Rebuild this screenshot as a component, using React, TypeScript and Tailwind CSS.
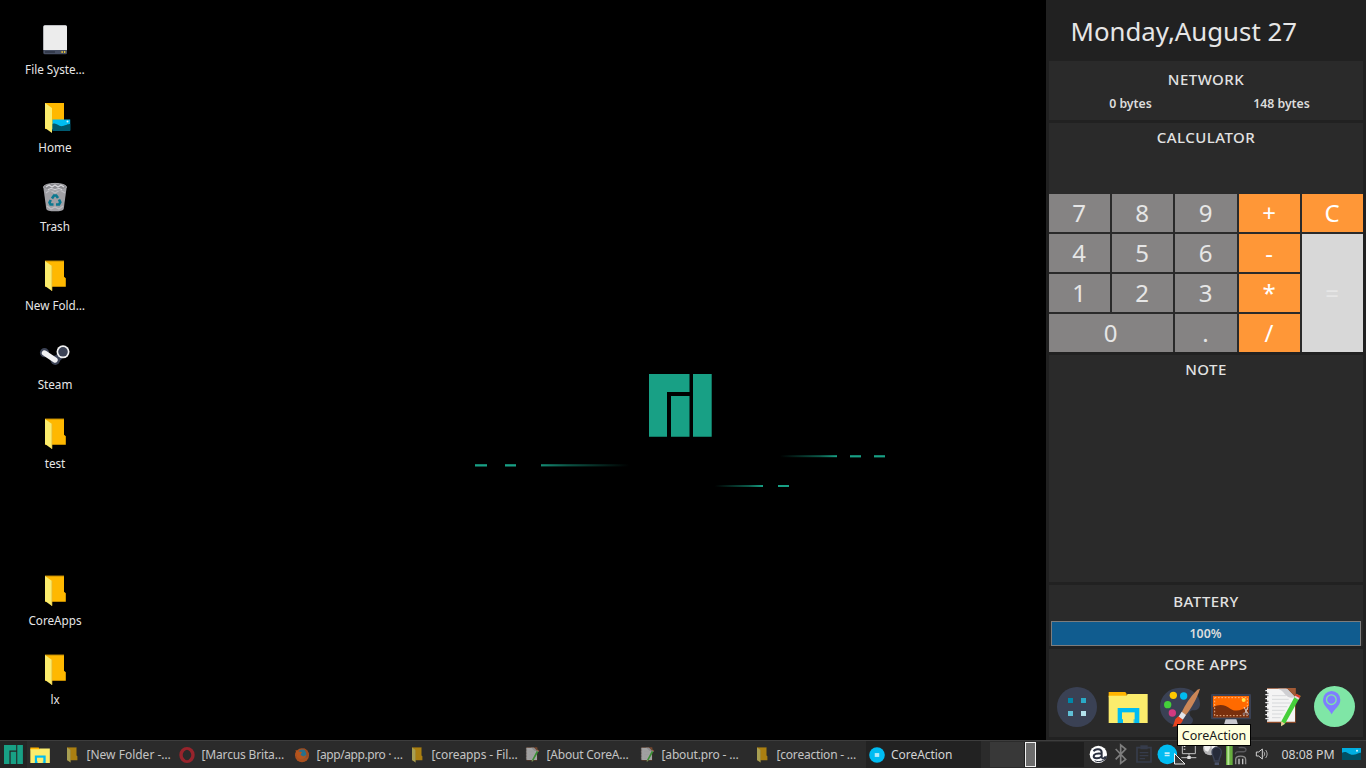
import type { ReactNode } from "react";
import clsx from "clsx";

function FolderIcon({ className }: { className?: string }) {
  return (
    <svg viewBox="0 0 32 32" className={className}>
      <path d="M6 .8h19v16l1.800 1.500v8.400H6z" fill="#ffb800" />
      <path d="M6 .8h19v.8H6z" fill="#c98f00" />
      <path d="M6 1l7 5v25l-7-5z" fill="#fbec6c" />
      <path d="M12.500 6v25l.8-.3V5.600z" fill="#e2b93a" />
    </svg>
  );
}

function HomeIcon() {
  return (
    <svg viewBox="0 0 32 32" className="size-8">
      <path d="M6 1h19v26H6z" fill="#ffb800" />
      <path d="M6 1l7 5v25l-7-5z" fill="#fbec6c" />
      <path d="M13.500 17.500H31.200v11H13.500z" fill="#00bcf2" />
      <path d="M13.500 22c4-2 6 3 10 2s5-2 7.700-2v6.500H13.500z" fill="#00586c" />
      <circle cx="28.500" cy="19.500" r="1" fill="#d9f5fb" />
    </svg>
  );
}

function DriveIcon() {
  return (
    <svg viewBox="0 0 32 32" className="size-8">
      <rect x="4.300" y="1.300" width="23.700" height="29" rx="1.500" fill="#474f63" />
      <path d="M5.800 1.300h20.700a1.500 1.500 0 0 1 1.500 1.500V26H4.300V2.800a1.500 1.500 0 0 1 1.500-1.500z" fill="#ececec" />
      <rect x="6" y="27.300" width="10" height="1.400" fill="#2b3242" />
      <rect x="22.500" y="27" width="1.300" height="2" fill="#e3c23a" />
      <rect x="25" y="27" width="1.300" height="2" fill="#e3c23a" />
    </svg>
  );
}

function TrashIcon() {
  return (
    <svg viewBox="0 0 32 32" className="size-8">
      <path d="M4.300 6L7.300 28q.5 2.300 8.700 2.300t8.700-2.300l3-22z" fill="#a0a0a5" />
      <path d="M7 12l4-3 5 3 5-3 5 3M8 25l4 3 4-2 4 2 4-3" stroke="#bebec3" strokeWidth="1.300" fill="none" />
      <ellipse cx="16" cy="6" rx="11.500" ry="3.600" fill="#8b8b90" stroke="#a9a9ad" />
      <path d="M7 6l3-2 3 2 3-2 3 2 3-2 3 2M9 8.500l3-1 4 1 4-1 3 1" stroke="#d8d8dc" strokeWidth="1.200" fill="none" />
      <g stroke="#0b7890" strokeWidth="2.600" fill="none">
        <path d="M13 17.500l2-3h2.200l1.800 2.500" />
        <path d="M20 18.500l1.300 2.800-1.300 2.200h-3" />
        <path d="M14.500 23.500h-3l-1-2 1.300-2.500" />
      </g>
    </svg>
  );
}

function SteamIcon() {
  return (
    <svg viewBox="0 0 32 32" className="size-8">
      <path d="M16.300 21.500L25 13" stroke="#3c4356" strokeWidth="7" strokeLinecap="round" />
      <circle cx="5.500" cy="13.700" r="4.600" fill="#3c4356" />
      <circle cx="16.300" cy="21.300" r="4.700" fill="#3c4356" />
      <path d="M5.500 14L16 21" stroke="#f0f0f2" strokeWidth="5.400" strokeLinecap="round" />
      <circle cx="24" cy="12.800" r="6.500" fill="#f2f2f2" />
      <circle cx="24" cy="12.800" r="4.800" fill="#3c4356" />
    </svg>
  );
}

function DesktopItem({ label, icon, tall = true }: { label: string; icon: ReactNode; tall?: boolean }) {
  return (
    <div className={clsx("flex w-[110px] flex-col items-center", tall ? "h-[79px]" : "h-[78px]")}>
      {icon}
      <span className="mt-[5px] text-[11.7px] leading-4 text-[#e6e6e6]">{label}</span>
    </div>
  );
}

function ManjaroLogo({ className }: { className?: string }) {
  return (
    <svg viewBox="0 0 63 63" className={className} fill="#18a085">
      <path d="M0 0h40.500v18H18v44.700H0zM22 22h18.500v40.700H22zM44 0h18.700v62.700H44z" />
    </svg>
  );
}

function Wallpaper() {
  return (
    <div className="relative flex-1">
      <ManjaroLogo className="absolute top-[374px] left-[539px] size-[63px]" />
      <svg viewBox="460 440 440 60" className="absolute top-[440px] left-[350px] h-[60px] w-[440px]">
        <defs>
          <linearGradient id="fadeRight">
            <stop offset="0" stopColor="#148a73" />
            <stop offset=".3" stopColor="#0b5546" />
            <stop offset="1" stopColor="#000" />
          </linearGradient>
          <linearGradient id="fadeLeft">
            <stop offset="0" stopColor="#000" />
            <stop offset=".7" stopColor="#0b5a4a" />
            <stop offset="1" stopColor="#18a085" />
          </linearGradient>
        </defs>
        <g fill="#18a085">
          <rect x="475" y="464.200" width="12" height="2.300" />
          <rect x="505" y="464.200" width="11" height="2.300" />
          <rect x="850" y="455.200" width="11" height="2.200" />
          <rect x="874" y="455.200" width="11" height="2.200" />
          <rect x="778" y="485" width="11" height="2" />
        </g>
        <rect x="541" y="464.200" width="88" height="2.200" fill="url(#fadeRight)" />
        <rect x="780" y="455.200" width="57" height="2" fill="url(#fadeLeft)" />
        <rect x="715" y="485" width="48" height="2" fill="url(#fadeLeft)" />
      </svg>
    </div>
  );
}

function SectionTitle({ children }: { children: ReactNode }) {
  return <h2 className="text-center text-[15px] leading-5 font-medium tracking-[0.45px] text-[#e2e2e2]">{children}</h2>;
}

const keyBase = "flex items-center justify-center pr-px text-[24px] leading-none";
const digitKey = "bg-[#858383] text-[#e6e6e6]";
const opKey = "bg-[#ff9737] text-white";

function Calculator() {
  const keys: [string, string][] = [
    ["7", digitKey], ["8", digitKey], ["9", digitKey], ["+", opKey], ["C", opKey],
    ["4", digitKey], ["5", digitKey], ["6", digitKey], ["-", opKey],
    ["=", "row-span-3 bg-[#d8d8d8] text-[#e6e6e6]"],
    ["1", digitKey], ["2", digitKey], ["3", digitKey], ["*", opKey],
    ["0", "col-span-2 bg-[#858383] text-[#e6e6e6]"], [".", digitKey], ["/", opKey],
  ];
  return (
    <section className="mt-[3px] h-[229px] bg-[#2a2a2a] pt-[4px]">
      <SectionTitle>CALCULATOR</SectionTitle>
      <div className="mt-[47px] grid grid-cols-[61px_61px_62px_61px_61px] grid-rows-[38px_38px_38px_38px] gap-[2px]">
        {keys.map(([k, style]) => (
          <button key={k} className={clsx(keyBase, style)}>{k}</button>
        ))}
      </div>
    </section>
  );
}

function AppsGridIcon() {
  return (
    <svg viewBox="51 36 120 120" className="size-10">
      <circle cx="111" cy="96" r="60" fill="#3a4154" />
      <path d="M84 69h15v15H84z" fill="#0088a9" />
      <path d="M123 69h15v15h-15z" fill="#2baac6" />
      <path d="M84 108h15v15H84z" fill="#60bfd6" />
      <path d="M123 108h15v15h-15z" fill="#b4e2ec" />
    </svg>
  );
}

function FilesIcon({ className }: { className?: string }) {
  return (
    <svg viewBox="205 36 120 120" className={className}>
      <path d="M207 51h50l4 6v10h-54z" fill="#ffb400" />
      <path d="M207 62h53l4-5h60v87H207z" fill="#fbec6c" />
      <path d="M234 99h65v45h-65z" fill="#00bcf2" />
      <path d="M247 112h38v32h-38z" fill="#fbec6c" />
      <path d="M247 133h3v11h-3zM282 133h3v11h-3z" fill="#00bcf2" />
    </svg>
  );
}

function PaintIcon() {
  return (
    <svg viewBox="360 36 120 120" className="size-10">
      <path d="M420 38c37 0 60 23 60 48 0 14-8 20-19 20-10 0-14 5-11 14 2 8 12 8 8 20-4 10-20 14-38 13-34-2-60-27-60-58s25-57 60-57z" fill="#3a4154" />
      <circle cx="400" cy="61" r="11" fill="#ffc800" />
      <circle cx="431" cy="63" r="11" fill="#00bcf2" />
      <circle cx="383" cy="89" r="11" fill="#44d03a" />
      <circle cx="397" cy="114" r="11" fill="#d23a80" />
      <path d="M480 41l-8 3c-22 22-37 46-47 68l12 9c18-24 33-48 43-80z" fill="#cb8658" />
      <path d="M425 110l13 10-10 15-13-9z" fill="#e4e4ea" />
      <path d="M415 124l14 10c-4 13-16 20-32 21 6-7 5-14 9-23z" fill="#e9441f" />
    </svg>
  );
}

function ScreenshotIcon() {
  return (
    <svg viewBox="516 36 120 120" className="size-10">
      <path d="M560 132h32l6 20h-44z" fill="#c9c9ce" />
      <rect x="516" y="57" width="120" height="76" rx="4" fill="#3a4154" />
      <path d="M522 63h108v64H522z" fill="#ff6a00" />
      <path d="M522 97c20-12 38-6 52 4s34 6 56-8v34H522z" fill="#7a2f0c" />
      <path d="M527 68h98v54h-98z" fill="none" stroke="#ffc89a" strokeWidth="2.500" strokeDasharray="5 5" />
      <circle cx="614" cy="75" r="6" fill="#ffe14d" />
      <path d="M615 96l9 18M627 96l-9 18" stroke="#e8e8ee" strokeWidth="2.500" />
      <circle cx="615" cy="117" r="3" fill="none" stroke="#9aa0b4" strokeWidth="2" />
      <circle cx="626" cy="117" r="3" fill="none" stroke="#9aa0b4" strokeWidth="2" />
    </svg>
  );
}

function NotesIcon({ className }: { className?: string }) {
  return (
    <svg viewBox="669 36 120 120" className={className}>
      <path d="M681 39h86v105h-86z" fill="#8e4a28" />
      <path d="M681 41h58l26 28v71h-84z" fill="#f4f4f4" />
      <path d="M714 41h28l24 25c-12 4-22 2-28-5s-10-14-24-20z" fill="#cfcfd2" />
      <path d="M742 39h25v27z" fill="#a35b36" />
      <g stroke="#c9cbcf" strokeWidth="2">
        <path d="M696 62h42M696 73h50M696 84h56M696 95h46M696 106h38M696 117h32M696 128h26" />
      </g>
      <path d="M683 45v94" stroke="#54545a" strokeWidth="5" strokeDasharray="3 5" />
      <path d="M676 47h14M676 59h14M676 71h14M676 83h14M676 95h14M676 107h14M676 119h14M676 131h14" stroke="#f2f2f4" strokeWidth="4" />
      <path d="M769 56l13 7-47 83-12 8 1-15z" fill="#46cf3a" />
      <path d="M769 56l13 7-4 8-13-8z" fill="#e03a2e" />
      <path d="M766 62l12 7-3 5-12-7z" fill="#ecd6df" />
      <path d="M724 139l11 7-12 8z" fill="#ecc89a" />
    </svg>
  );
}

function PinIcon() {
  return (
    <svg viewBox="822 33 123 123" className="size-[41px]">
      <circle cx="883.500" cy="94.500" r="61.500" fill="#7fe6a6" />
      <path d="M875 118c-7-16-26-25-26-44a26 26 0 0 1 52 0c0 19-19 28-26 44z" fill="#7f7dff" />
      <circle cx="874" cy="74" r="14.500" fill="none" stroke="#7fe6a6" strokeWidth="4" />
    </svg>
  );
}

function Sidebar() {
  return (
    <aside className="flex w-[320px] flex-col bg-[#212121] px-[3px]">
      <h1 className="h-[61px] pt-[13px] pl-[21.500px] text-[25.800px] leading-9 text-[#e6e6e6]">Monday,August 27</h1>
      <section className="h-[59px] bg-[#2a2a2a] pt-[8px]">
        <SectionTitle>NETWORK</SectionTitle>
        <div className="mt-[6px] grid grid-cols-2 text-center text-[12.300px] leading-[18px] font-semibold text-[#dcdcdc]">
          <span className="pl-[6px]">0 bytes</span>
          <span className="pr-[6px]">148 bytes</span>
        </div>
      </section>
      <Calculator />
      <section className="mt-[3px] h-[227px] bg-[#2a2a2a] pt-[4px]">
        <SectionTitle>NOTE</SectionTitle>
      </section>
      <section className="mt-[3px] h-[61px] bg-[#2a2a2a] px-[2px] pt-[6px]">
        <SectionTitle>BATTERY</SectionTitle>
        <div className="mt-[10px] h-[25px] border border-[#7d7d7d] bg-[#105c8f] pr-px text-center text-[12.300px] leading-[23px] font-semibold text-[#dcdcdc]">
          100%
        </div>
      </section>
      <section className="mt-[3px] h-[88px] bg-[#2a2a2a] pt-[5px]">
        <SectionTitle>CORE APPS</SectionTitle>
        <div className="mt-[12px] flex items-center justify-between pr-[8px] pl-[8px]">
          <AppsGridIcon />
          <FilesIcon className="size-10" />
          <PaintIcon />
          <ScreenshotIcon />
          <NotesIcon className="size-10" />
          <PinIcon />
        </div>
      </section>
    </aside>
  );
}

function OperaIcon() {
  return (
    <svg viewBox="0 0 16 16" className="size-4">
      <ellipse cx="8" cy="8" rx="6" ry="6.300" fill="none" stroke="#98242c" strokeWidth="3.400" />
      <ellipse cx="8" cy="8" rx="3.400" ry="5.300" fill="#2b2b2b" />
    </svg>
  );
}

function FirefoxIcon() {
  return (
    <svg viewBox="0 0 16 16" className="size-4">
      <circle cx="8" cy="8.300" r="7" fill="#a9501f" />
      <circle cx="8.500" cy="7" r="4.500" fill="#27708c" />
      <path d="M1.500 3l3 1.500L8 5 6.500 8l3 1.500L12 8c0 5-7 5-9 2z" fill="#b5541c" />
      <path d="M9 1c4 1 6 4 5.500 8L12 11c1-4 0-7-3-10z" fill="#9c4a1f" />
    </svg>
  );
}

function CoreActionIcon({ className }: { className?: string }) {
  return (
    <svg viewBox="0 0 16 16" className={className}>
      <circle cx="8" cy="8" r="7.800" fill="#00bcf2" />
      <path d="M5.800 6.200h4.400v3.600H5.800z" fill="#8adff8" />
      <path d="M5.800 6.400h4.400v1.100H5.800zM5.800 8.500h4.400v1.100H5.800z" fill="#d9f5fc" />
    </svg>
  );
}

function Task({ icon, label, active, tracking }: { icon: ReactNode; label: string; active?: boolean; tracking?: string }) {
  return (
    <div className={clsx("flex w-[115px] items-center gap-[6px] pl-[3px]", active && "bg-[#222]")}>
      <span className="flex w-4 justify-center">{icon}</span>
      <span className={clsx("text-[12px] whitespace-nowrap", active ? "text-[#d4d4d4]" : "pl-[.5px] text-[#c4c4c4]", tracking)}>
        {label}
      </span>
    </div>
  );
}

function Tray() {
  return (
    <div className="flex h-[27px] pl-[2px]">
      <svg viewBox="138 198 72 81" className="h-[27px] w-6">
        <circle cx="175" cy="238" r="26" fill="#fff" />
        <path d="M161 229c4-9 24-9 24 3v17M185 236c-14-2-24 1-24 8s15 9 24 0M185 249c5 3 10 0 12-5" fill="none" stroke="#2a3040" strokeWidth="6" />
        <path d="M200 244c-3 13-24 20-36 13" fill="none" stroke="#2a3040" strokeWidth="3" />
      </svg>
      <svg viewBox="210 198 66 81" className="h-[27px] w-[22px]">
        <path d="M227 222l30 31-15 12v-55l15 12-30 31" fill="none" stroke="#7e7e7e" strokeWidth="5" />
      </svg>
      <svg viewBox="276 198 72 81" className="h-[27px] w-6">
        <path d="M291 218h42v43h-42z" fill="none" stroke="#363c4b" strokeWidth="5" />
        <path d="M301 211h22v12h-22zM299 231h26v4h-26zM299 240h26v4h-26zM299 249h16v4h-16z" fill="#363c4b" />
      </svg>
      <svg viewBox="348 198 63 81" className="h-[27px] w-[21px]">
        <circle cx="382" cy="238" r="29.500" fill="#00bcf2" />
        <path d="M374 232h15v5h-15zM374 239h15v5h-15z" fill="#c2effb" />
      </svg>
      <svg viewBox="411 198 66 81" className="h-[27px] w-[22px]">
        <path d="M427 200v36h39v-36M447 236v11M424 248h45" fill="none" stroke="#c2c2c2" strokeWidth="3" />
        <path d="M431 213h5v3h-5zM431 221h5v3h-5zM442 243h10v9h-10z" fill="#e0e0e0" />
      </svg>
      <svg viewBox="477 198 75 81" className="h-[27px] w-[25px]">
        <circle cx="511" cy="219" r="22" fill="#b4b4b6" />
        <path d="M492 212l14-6 6 10-8 14-10-4zM514 208h12l-2 12-8 4z" fill="#f0f0f0" />
        <path d="M523 258c0-12-7-14-7-27a14 14 0 0 1 28 0c0 13-7 15-7 27z" fill="#262b39" stroke="#3c4356" strokeWidth="4" />
        <path d="M524 262h13v8h-13z" fill="#4b536a" />
      </svg>
      <svg viewBox="552 198 75 81" className="h-[27px] w-[25px]">
        <path d="M558 205h20v65h-20z" fill="#67ad3e" />
        <path d="M562 205h6v65h-6z" fill="#b6e596" />
        <path d="M586 238c0-16 32 0 32-14 0-7-12-7-22-6" fill="none" stroke="#59595c" strokeWidth="4" />
        <path d="M587 268v-14c0-14 30-14 30 0v14" fill="#303030" stroke="#8d8d8d" strokeWidth="4" />
        <path d="M597 251v17M608 251v17" stroke="#c6c6c6" strokeWidth="4" />
      </svg>
      <svg viewBox="630 198 78 81" className="h-[27px] w-[26px]">
        <path d="M652 231h7l11-9v30l-11-9h-7z" fill="none" stroke="#d0d0d0" strokeWidth="3" />
        <path d="M674 230c4 4 4 10 0 14M680 225c6 8 6 16 0 24" fill="none" stroke="#c0c0c0" strokeWidth="2.500" />
      </svg>
    </div>
  );
}

function Taskbar() {
  const dimFolder = <FolderIcon className="size-4 opacity-60" />;
  const dimNotes = <NotesIcon className="size-[15px] opacity-60" />;
  return (
    <footer className="flex h-7 border-t border-[#3d3d3d] bg-[#2b2b2b]">
      <div className="flex w-[27px] items-center justify-center bg-[#242424]">
        <ManjaroLogo className="size-[19px]" />
      </div>
      <div className="flex w-[34px] items-center pl-[3px]">
        <FilesIcon className="size-5" />
      </div>
      <Task icon={dimFolder} label="[New Folder -…" />
      <Task icon={<OperaIcon />} label="[Marcus Brita…" tracking="tracking-[-0.16px]" />
      <Task icon={<FirefoxIcon />} label="[app/app.pro · …" tracking="tracking-[-0.42px]" />
      <Task icon={dimFolder} label="[coreapps - Fil…" tracking="tracking-[-0.1px]" />
      <Task icon={dimNotes} label="[About CoreA…" tracking="tracking-[-0.2px]" />
      <Task icon={dimNotes} label="[about.pro - …" tracking="tracking-[-0.15px]" />
      <Task icon={dimFolder} label="[coreaction - …" tracking="tracking-[-0.2px]" />
      <Task icon={<CoreActionIcon className="size-4" />} label="CoreAction" active tracking="tracking-[-0.05px]" />
      <div className="my-px ml-[9px] flex w-[94px] bg-[#1f1f1f]">
        <div className="w-[34px] bg-[#383838]" />
        <div className="ml-px w-[11px] border border-[#f0f0f0] bg-[#6c6c6c]" />
      </div>
      <Tray />
      <div className="flex w-[66px] items-center justify-center pt-px text-[12.300px] whitespace-nowrap text-[#d4d4d4]">08:08 PM</div>
      <svg viewBox="0 0 57 36" className="mt-[7px] ml-px h-3 w-[19px]">
        <path d="M0 0h57v36H0z" fill="#00aee0" />
        <path d="M0 14c16-8 20 8 34 6s14-6 23-6v22H0z" fill="#005064" />
        <circle cx="45" cy="8" r="3" fill="#d5f3fa" />
      </svg>
    </footer>
  );
}

export default function App() {
  return (
    <div className="relative flex h-[768px] w-[1366px] flex-col overflow-hidden bg-black font-['Noto_Sans',sans-serif]">
      <main className="flex h-[740px]">
        <div className="flex w-[110px] flex-col pt-6">
          <DesktopItem label="File Syste…" icon={<DriveIcon />} tall={false} />
          <DesktopItem label="Home" icon={<HomeIcon />} />
          <DesktopItem label="Trash" icon={<TrashIcon />} />
          <DesktopItem label="New Fold…" icon={<FolderIcon className="size-8" />} />
          <DesktopItem label="Steam" icon={<SteamIcon />} />
          <DesktopItem label="test" icon={<FolderIcon className="size-8" />} />
          <div className="h-[78px]" />
          <DesktopItem label="CoreApps" icon={<FolderIcon className="size-8" />} />
          <DesktopItem label="lx" icon={<FolderIcon className="size-8" />} />
        </div>
        <Wallpaper />
        <Sidebar />
      </main>
      <Taskbar />
      <svg viewBox="0 0 12 12" className="absolute top-[753px] left-[1174px] size-3">
        <path d="M.5 .5v10.500L11 11z" fill="#3a3a3a" stroke="#f0f0f0" />
      </svg>
      <div className="absolute top-[724px] left-[1177px] flex h-[22px] w-[74px] items-center justify-center border border-black bg-[#ffffdc] pt-[2px] text-[12.500px] text-[#1a1a1a]">
        CoreAction
      </div>
    </div>
  );
}
